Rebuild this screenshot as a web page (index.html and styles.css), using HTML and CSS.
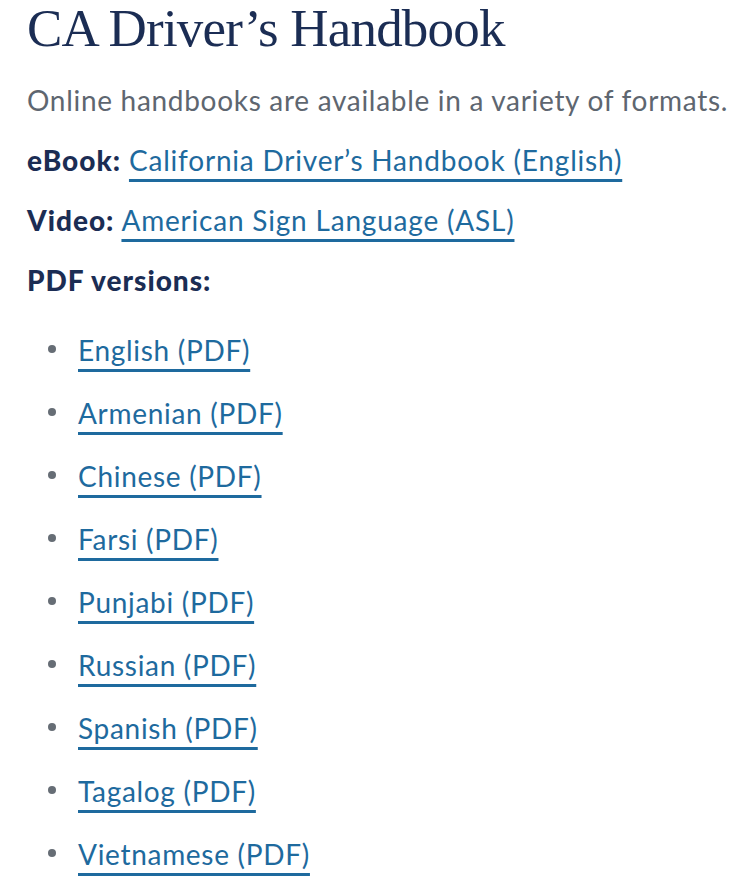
FILE: index.html
```html
<!DOCTYPE html>
<html lang="en">
<head>
<meta charset="utf-8">
<title>CA Driver's Handbook</title>
<link rel="stylesheet" href="styles.css">
</head>
<body>
<main class="page">
  <h1 class="title">CA Driver’s Handbook</h1>
  <p class="lead">Online handbooks are available in a variety of formats.</p>
  <p class="row"><strong class="label">eBook:</strong> <a class="link" href="#">California Driver’s Handbook (English)</a></p>
  <p class="row"><strong class="label">Video:</strong> <a class="link" href="#">American Sign Language (ASL)</a></p>
  <p class="row"><strong class="label">PDF versions:</strong></p>
  <ul class="list">
    <li class="item"><a class="link" href="#">English (PDF)</a></li>
    <li class="item"><a class="link" href="#">Armenian (PDF)</a></li>
    <li class="item"><a class="link" href="#">Chinese (PDF)</a></li>
    <li class="item"><a class="link" href="#">Farsi (PDF)</a></li>
    <li class="item"><a class="link" href="#">Punjabi (PDF)</a></li>
    <li class="item"><a class="link" href="#">Russian (PDF)</a></li>
    <li class="item"><a class="link" href="#">Spanish (PDF)</a></li>
    <li class="item"><a class="link" href="#">Tagalog (PDF)</a></li>
    <li class="item"><a class="link" href="#">Vietnamese (PDF)</a></li>
  </ul>
</main>
</body>
</html>
```
FILE: styles.css
```css
html, body {
  margin: 0;
  padding: 0;
  background: #ffffff;
}
.page {
  padding: 0 0 0 27px;
  font-family: Lato, "Open Sans", sans-serif;
  color: #5e6670;
}
.title {
  margin: -4px 0 0;
  font-family: "Liberation Serif", "DejaVu Serif", serif;
  font-weight: 400;
  font-size: 53px;
  letter-spacing: -0.8px;
  line-height: 64px;
  color: #1b2d54;
}
.lead {
  margin: 20px 0 0;
  font-size: 28px;
  letter-spacing: 0.7px;
  line-height: 40px;
}
.row {
  margin: 20px 0 0;
  font-size: 28px;
  letter-spacing: 0.8px;
  line-height: 40px;
}
.label {
  font-weight: 900;
  color: #1b2d54;
  letter-spacing: 1px;
}
.link {
  color: #1e6a9e;
  text-decoration: underline;
  text-decoration-thickness: 3px;
  text-underline-offset: 8px;
}
.list {
  list-style: none;
  margin: 30px 0 0;
  padding: 0 0 0 21px;
  font-size: 28px;
  letter-spacing: 0.7px;
  line-height: 40px;
}
.item {
  display: flex;
  align-items: center;
  gap: 22px;
  margin: 0 0 23px;
}
.item::before {
  content: "";
  flex: none;
  width: 8px;
  height: 8px;
  border-radius: 50%;
  background: #666d75;
  margin-top: -2px;
}
```
